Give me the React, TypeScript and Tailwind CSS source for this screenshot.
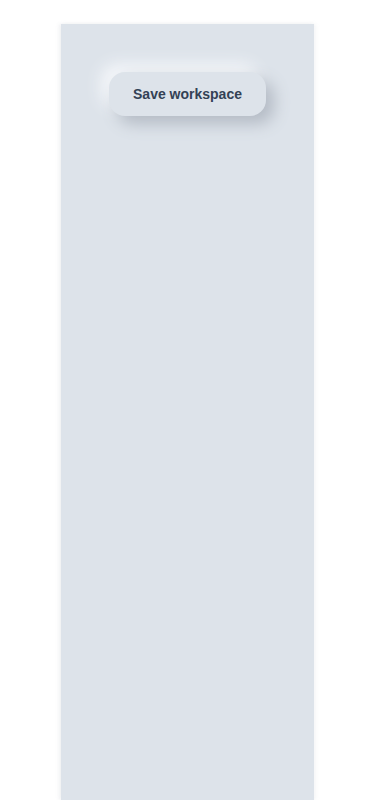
export default function App() {
  return (
    <div className="min-h-[800px] bg-white pt-6" style={{ fontFamily: '"Liberation Sans", Arial, sans-serif' }}>
      <div className="mx-auto h-[776px] w-[253px] bg-[#dde3ea] shadow-[-2px_0_4px_rgba(180,186,196,0.2),2px_0_4px_rgba(180,186,196,0.12)]">
        <div className="flex justify-center pt-12">
          <button className="h-11 rounded-2xl bg-[#dde3ea] px-6 text-sm font-bold text-[#334155] shadow-[8px_8px_16px_#b4bbc5,-8px_-8px_16px_#f5f7fa]">
            Save workspace
          </button>
        </div>
      </div>
    </div>
  );
}
